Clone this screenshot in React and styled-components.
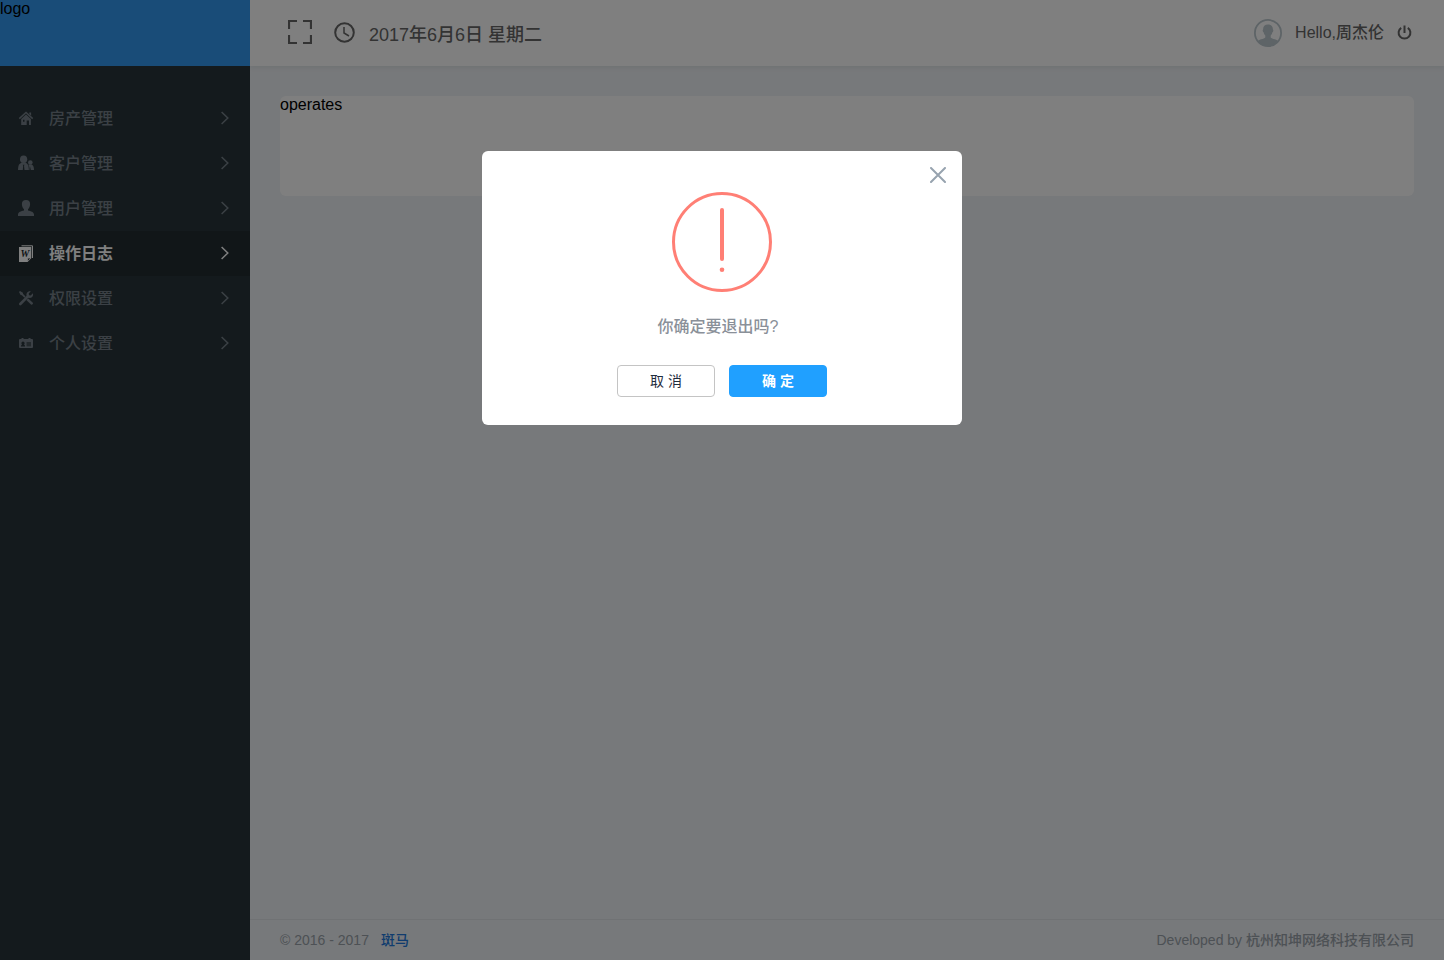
import React, { useState } from "react";
import styled, { createGlobalStyle } from "styled-components";

const GlobalStyle = createGlobalStyle`
  *, *::before, *::after { box-sizing: border-box; }
  body {
    margin: 0;
    font-family: "Liberation Sans", "Noto Sans CJK SC", sans-serif;
    font-size: 16px;
    line-height: 18px;
    color: #000;
    background: #eff2f6;
  }
  button { font: inherit; cursor: pointer; }
  svg { display: block; flex: none; }
`;

const Layout = styled.div`
  display: flex;
  min-height: 100vh;
`;

const Sidebar = styled.aside`
  flex: none;
  width: 250px;
  background: #29353a;
`;

const Logo = styled.div`
  height: 66px;
  background: #3299f0;
`;

const Menu = styled.nav`
  display: flex;
  flex-direction: column;
  padding-top: 30px;
`;

const MenuItem = styled.a`
  display: flex;
  align-items: center;
  gap: 15px;
  height: 45px;
  padding: 0 21px 1px 18px;
  text-decoration: none;
  color: ${(p) => (p.$active ? "#fff" : "#76818a")};
  font-weight: ${(p) => (p.$active ? 700 : 500)};
  background: ${(p) => (p.$active ? "#222c30" : "transparent")};
`;

const MenuLabel = styled.span`
  flex: 1;
  padding-top: 2px;
`;

const Main = styled.div`
  display: flex;
  flex: 1;
  flex-direction: column;
  min-width: 0;
`;

const Header = styled.header`
  display: flex;
  align-items: center;
  justify-content: space-between;
  height: 66px;
  padding: 0 32px 0 38px;
  color: #666;
  font-weight: 500;
  background: #fff;
  box-shadow: 0 2px 4px #dfe5e8;
  clip-path: inset(0 0 -8px 0);
`;

const HeaderGroup = styled.div`
  display: flex;
  align-items: center;
  gap: ${(p) => p.$gap}px;
`;

const HeaderTools = styled(HeaderGroup)`
  padding-bottom: 2px;
`;

const IconButton = styled.button`
  display: flex;
  padding: 0;
  border: 0;
  color: inherit;
  background: none;
`;

const DateText = styled.time`
  padding-top: 6px;
  font-size: 18px;
  line-height: 22px;
`;

const Content = styled.main`
  flex: 1;
  padding: 30px;
`;

const Card = styled.section`
  min-height: 100px;
  border-radius: 6px;
  background: #fff;
`;

const Footer = styled.footer`
  display: flex;
  align-items: center;
  justify-content: space-between;
  height: 41px;
  padding: 0 30px;
  border-top: 1px solid #e0e4e8;
  font-size: 14px;
  font-weight: 500;
  color: #9aa3aa;
`;

const FooterLink = styled.a`
  margin-left: 12px;
  color: #2078dc;
  text-decoration: none;
`;

const Backdrop = styled.div`
  position: fixed;
  inset: 0;
  display: flex;
  align-items: flex-start;
  justify-content: center;
  padding-top: 151px;
  background: rgba(0, 0, 0, 0.5);
`;

const Dialog = styled.div`
  display: flex;
  flex-direction: column;
  width: 480px;
  padding: 16px 16px 28px;
  border-radius: 6px;
  background: #fff;
`;

const CloseButton = styled(IconButton)`
  align-self: flex-end;
  color: #97a3af;
`;

const DialogBody = styled.div`
  display: flex;
  flex-direction: column;
  align-items: center;
  padding-top: 9px;
`;

const Message = styled.p`
  margin: 0;
  padding: 25px 8px 28px 0;
  line-height: 20px;
  font-weight: 500;
  color: #8a9099;
`;

const Actions = styled.div`
  display: flex;
  gap: 14px;
`;

const ActionButton = styled.button`
  width: 98px;
  height: 32px;
  padding: 0;
  border: 1px solid ${(p) => (p.$primary ? "#20a0ff" : "#c4c4c4")};
  border-radius: 4px;
  font-size: 14px;
  font-weight: ${(p) => (p.$primary ? 700 : 400)};
  color: ${(p) => (p.$primary ? "#fff" : "#1f2d3d")};
  background: ${(p) => (p.$primary ? "#20a0ff" : "#fff")};
`;

const MenuGlyph = ({ children }) => (
  <svg width="16" height="16" viewBox="0 0 16 16" fill="currentColor" overflow="visible" aria-hidden="true">
    {children}
  </svg>
);

const HomeIcon = () => (
  <MenuGlyph>
    <path d="M1.3 8.6 8 2.5l6.700 6.100" fill="none" stroke="currentColor" strokeWidth="1.500" />
    <path d="M11.300 2.500h1.800v3.300l-1.800-1.700z" />
    <path fillRule="evenodd" d="M8 4.600 12.900 9v6H11v-4.600H8.700V15H3.200V9zM5 9.800v2h1.500v-2z" />
  </MenuGlyph>
);

const ClientsIcon = () => (
  <MenuGlyph>
    <ellipse cx="5.6" cy="4.3" rx="3.6" ry="3.8" />
    <circle cx="12.300" cy="7.500" r="2.300" />
    <path d="M3.600 7.500 1.300 9.200Q.2 10.300 0 15h4.800l.4-4.200-.5-1h1.800l-.5 1 .5 4.200h4.400c-.2-3.500-.4-5.200-1.800-6.200L7.700 7.500z" />
    <path d="M11 9.500h2.600c1.800.7 2.400 2.600 2.400 5.500h-3.200l-.4-3.600-.4 3.600h-.4c-.1-2.400-.2-3.900-1.200-5z" />
  </MenuGlyph>
);

const UserIcon = () => (
  <MenuGlyph>
    <path d="M8 0c2.700 0 4.100 1.500 4.100 4.100 0 2.200-.8 4.100-2.100 5.100v1.300c2.800.8 6 1.500 6 4V16H0v-1.500c0-2.500 3.200-3.200 6-4V9.200C4.700 8.200 3.900 6.300 3.900 4.100 3.900 1.500 5.300 0 8 0z" />
  </MenuGlyph>
);

const LogIcon = () => (
  <MenuGlyph>
    <path d="M3.500 .8h11v12.200" fill="none" stroke="currentColor" strokeWidth="1" />
    <path d="M1 2h12.300v10.800L9.300 17H1z" />
    <path d="M9.600 16.600v-3.500h3.400z" fill="#222c30" stroke="currentColor" strokeWidth=".8" />
    <text x="6.900" y="11.800" textAnchor="middle" fontFamily="Liberation Serif, serif" fontSize="10" fontStyle="italic" fontWeight="700" fill="#222c30">W</text>
  </MenuGlyph>
);

const ToolsIcon = () => (
  <MenuGlyph>
    <path d="m2.300 14 7.600-7.600" stroke="currentColor" strokeWidth="2.600" strokeLinecap="round" />
    <path d="M12.900 1.300 10.700 3.500l.3 1.700 1.700.3 2.200-2.200c.5 2-.1 3.500-1.400 4.300-1.300.7-2.800.4-4-.4-1.200-1.400-1.400-3-.6-4.300.8-1.300 2.300-2 4-1.600z" />
    <path d="m1 2.100 1-1 2.900 1.700.2 1.300 2.500 2.500-1.200 1.200-2.500-2.500-1.300-.2z" />
    <path d="m9.300 9.200 1-.8 4.500 4.300c.8.900-.9 2.700-1.800 1.900L8.500 10.200z" />
  </MenuGlyph>
);

const ProfileIcon = () => (
  <MenuGlyph>
    <path fillRule="evenodd" d="M2 3.900h1.500V3h2v.9h5V3h2v.9H14q1 0 1 1V12q0 1-1 1H2q-1 0-1-1V4.900q0-1 1-1zM3 10.600v.8h4v-.8L6 9.700q.7-.7.600-1.700Q6.500 6.500 5 6.500T3.400 8Q3.400 9 4 9.700zM8.700 7v4.300H13V7z" />
    <path d="M8.700 7H13v4.300H8.700z" opacity=".4" />
  </MenuGlyph>
);

const ChevronIcon = () => (
  <svg width="8" height="14" viewBox="0 0 8 14" fill="none" stroke="currentColor" strokeWidth="1.500" aria-hidden="true">
    <path d="m.6 1 6.200 6-6.200 6" />
  </svg>
);

const FullscreenIcon = () => (
  <svg width="24" height="24" viewBox="0 0 24 24" fill="none" stroke="currentColor" strokeWidth="2.200" aria-hidden="true">
    <path d="M1 9V1h8M15 1h8v8M23 15v8h-8M9 23H1v-8" />
  </svg>
);

const ClockIcon = () => (
  <svg width="21" height="21" viewBox="0 0 21 21" fill="none" stroke="currentColor" aria-hidden="true">
    <circle cx="10.500" cy="10.500" r="9.300" strokeWidth="2" />
    <path d="M10 5v6l5 3" strokeWidth="1.500" />
  </svg>
);

const Avatar = () => (
  <svg width="28" height="28" viewBox="0 0 28 28" role="img" aria-label="周杰伦">
    <clipPath id="avatar-disc"><circle cx="14" cy="14" r="13" /></clipPath>
    <g clipPath="url(#avatar-disc)" fill="#bcc8ce">
      <path d="M14 5.500c3.300 0 5 2 4.900 5 .7.300.5 2.300-.5 2.800-.3 1.500-.9 2.500-1.700 3.200v2c1 1.700 7.300 1.500 8.500 5V28H2.800v-4.500c1.200-3.500 7.500-3.300 8.500-5v-2c-.8-.7-1.400-1.700-1.700-3.200-1-.5-1.200-2.500-.5-2.800-.1-3 1.600-5 4.900-5z" />
    </g>
    <circle cx="14" cy="14" r="13.100" fill="none" stroke="#bcc8ce" strokeWidth="1.800" />
  </svg>
);

const PowerIcon = () => (
  <svg width="15" height="16" viewBox="0 0 15 16" fill="none" stroke="currentColor" strokeWidth="2" aria-hidden="true">
    <path d="M7.500 .5v7.500M4.200 2.800a5.900 5.900 0 1 0 6.600 0" />
  </svg>
);

const CloseIcon = () => (
  <svg width="16" height="16" viewBox="0 0 16 16" fill="none" stroke="currentColor" strokeWidth="2" strokeLinecap="round" aria-hidden="true">
    <path d="m1 1 14 14M15 1 1 15" />
  </svg>
);

const WarningIcon = () => (
  <svg width="100" height="100" viewBox="0 0 100 100" fill="none" stroke="#ff7f75" aria-hidden="true">
    <circle cx="50" cy="50" r="48.500" strokeWidth="3" />
    <path d="M50 18v49" strokeWidth="4" strokeLinecap="round" />
    <circle cx="50" cy="77.700" r="2.300" fill="#ff7f75" stroke="none" />
  </svg>
);

const menu = [
  { label: "房产管理", href: "#houses", Icon: HomeIcon },
  { label: "客户管理", href: "#customers", Icon: ClientsIcon },
  { label: "用户管理", href: "#users", Icon: UserIcon },
  { label: "操作日志", href: "#operates", Icon: LogIcon, active: true },
  { label: "权限设置", href: "#permissions", Icon: ToolsIcon },
  { label: "个人设置", href: "#profile", Icon: ProfileIcon },
];

export default function App() {
  const [confirming, setConfirming] = useState(true);
  const close = () => setConfirming(false);

  return (
    <>
      <GlobalStyle />
      <Layout>
        <Sidebar>
          <Logo>logo</Logo>
          <Menu>
            {menu.map(({ label, href, Icon, active }) => (
              <MenuItem key={href} href={href} $active={active} aria-current={active ? "page" : undefined}>
                <Icon />
                <MenuLabel>{label}</MenuLabel>
                <ChevronIcon />
              </MenuItem>
            ))}
          </Menu>
        </Sidebar>
        <Main>
          <Header>
            <HeaderTools $gap={22}>
              <IconButton type="button" aria-label="全屏"><FullscreenIcon /></IconButton>
              <HeaderGroup $gap={14}>
                <ClockIcon />
                <DateText dateTime="2017-06-06">2017年6月6日 星期二</DateText>
              </HeaderGroup>
            </HeaderTools>
            <HeaderGroup $gap={13}>
              <Avatar />
              <span>Hello,周杰伦</span>
              <IconButton type="button" aria-label="退出" onClick={() => setConfirming(true)}><PowerIcon /></IconButton>
            </HeaderGroup>
          </Header>
          <Content>
            <Card>operates</Card>
          </Content>
          <Footer>
            <span>© 2016 - 2017<FooterLink href="#home">斑马</FooterLink></span>
            <span>Developed by 杭州知坤网络科技有限公司</span>
          </Footer>
        </Main>
      </Layout>
      {confirming && (
        <Backdrop>
          <Dialog role="dialog" aria-modal="true" aria-labelledby="confirm-message">
            <CloseButton type="button" aria-label="关闭" onClick={close}><CloseIcon /></CloseButton>
            <DialogBody>
              <WarningIcon />
              <Message id="confirm-message">你确定要退出吗?</Message>
              <Actions>
                <ActionButton type="button" onClick={close}>取 消</ActionButton>
                <ActionButton type="button" $primary onClick={close}>确 定</ActionButton>
              </Actions>
            </DialogBody>
          </Dialog>
        </Backdrop>
      )}
    </>
  );
}
